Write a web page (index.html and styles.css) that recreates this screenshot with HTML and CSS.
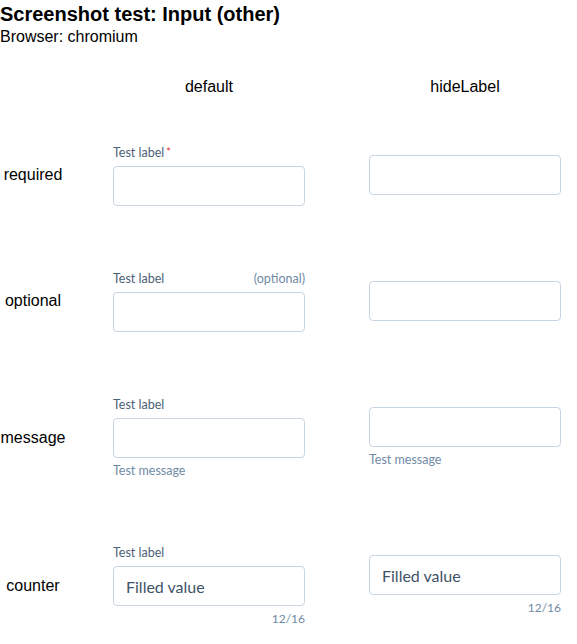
FILE: index.html
```html
<!DOCTYPE html>
<html>
<head>
<meta charset="utf-8">
<link rel="stylesheet" href="styles.css">
</head>
<body>
<h1 class="title">Screenshot test: Input (other)</h1>
<p class="subtitle">Browser: chromium</p>
<div class="grid">
  <div class="rowhead"></div>
  <div class="colhead pad">default</div>
  <div class="colhead">hideLabel</div>

  <div class="rowhead">required</div>
  <div class="cell pad">
    <div class="field">
      <div class="label-row"><span class="label">Test label<span class="req">*</span></span></div>
      <div class="input"></div>
    </div>
  </div>
  <div class="cell">
    <div class="field"><div class="input"></div></div>
  </div>

  <div class="rowhead">optional</div>
  <div class="cell pad">
    <div class="field">
      <div class="label-row"><span class="label">Test label</span><span class="opt">(optional)</span></div>
      <div class="input"></div>
    </div>
  </div>
  <div class="cell">
    <div class="field"><div class="input"></div></div>
  </div>

  <div class="rowhead">message</div>
  <div class="cell pad">
    <div class="field">
      <div class="label-row"><span class="label">Test label</span></div>
      <div class="input"></div>
      <div class="message">Test message</div>
    </div>
  </div>
  <div class="cell">
    <div class="field">
      <div class="input"></div>
      <div class="message">Test message</div>
    </div>
  </div>

  <div class="rowhead">counter</div>
  <div class="cell pad">
    <div class="field">
      <div class="label-row"><span class="label">Test label</span></div>
      <div class="input filled">Filled value</div>
      <div class="counter">12/16</div>
    </div>
  </div>
  <div class="cell">
    <div class="field">
      <div class="input filled">Filled value</div>
      <div class="counter">12/16</div>
    </div>
  </div>
</div>
</body>
</html>
```

FILE: styles.css
```css
html, body {
  margin: 0;
  padding: 0;
  background: #ffffff;
}
body {
  font-family: "Liberation Sans", Arial, sans-serif;
  color: #000;
}
.title {
  margin: 0;
  font-size: 20px;
  line-height: 28px;
  font-weight: bold;
}
.subtitle {
  margin: 0;
  font-size: 16px;
  line-height: 18px;
}
.grid {
  display: grid;
  grid-template-columns: 113px 256px 192px;
  align-items: center;
  margin-top: 16px;
}
.rowhead {
  width: 66px;
  text-align: center;
  font-size: 16px;
  line-height: 18px;
  align-self: stretch;
  display: flex;
  align-items: center;
  justify-content: center;
}
.colhead {
  font-size: 16px;
  line-height: 18px;
  text-align: center;
  padding: 16px 0;
}
.colhead.pad, .cell.pad {
  padding-right: 64px;
}
.cell {
  padding: 32px 0;
}
.field {
  display: flex;
  flex-direction: column;
  gap: 4px;
  font-family: Lato, "Open Sans", sans-serif;
}
.label-row {
  display: flex;
  justify-content: space-between;
  font-size: 12.5px;
  line-height: 18px;
}
.label {
  color: #4b6176;
}
.req {
  color: #e0342f;
  margin-left: 2px;
  font-size: 11px;
  vertical-align: top;
  line-height: 15px;
}
.opt {
  color: #6f8aa5;
}
.input {
  box-sizing: border-box;
  height: 40px;
  border: 1px solid #c7d4e1;
  border-radius: 4px;
  background: #fff;
  padding: 0 12px;
  display: flex;
  align-items: center;
  font-size: 16px;
  color: #3f5267;
}
.message {
  font-size: 12.5px;
  line-height: 18px;
  color: #6f8aa5;
}
.counter {
  font-size: 12px;
  line-height: 18px;
  color: #6f8aa5;
  text-align: right;
}
```
